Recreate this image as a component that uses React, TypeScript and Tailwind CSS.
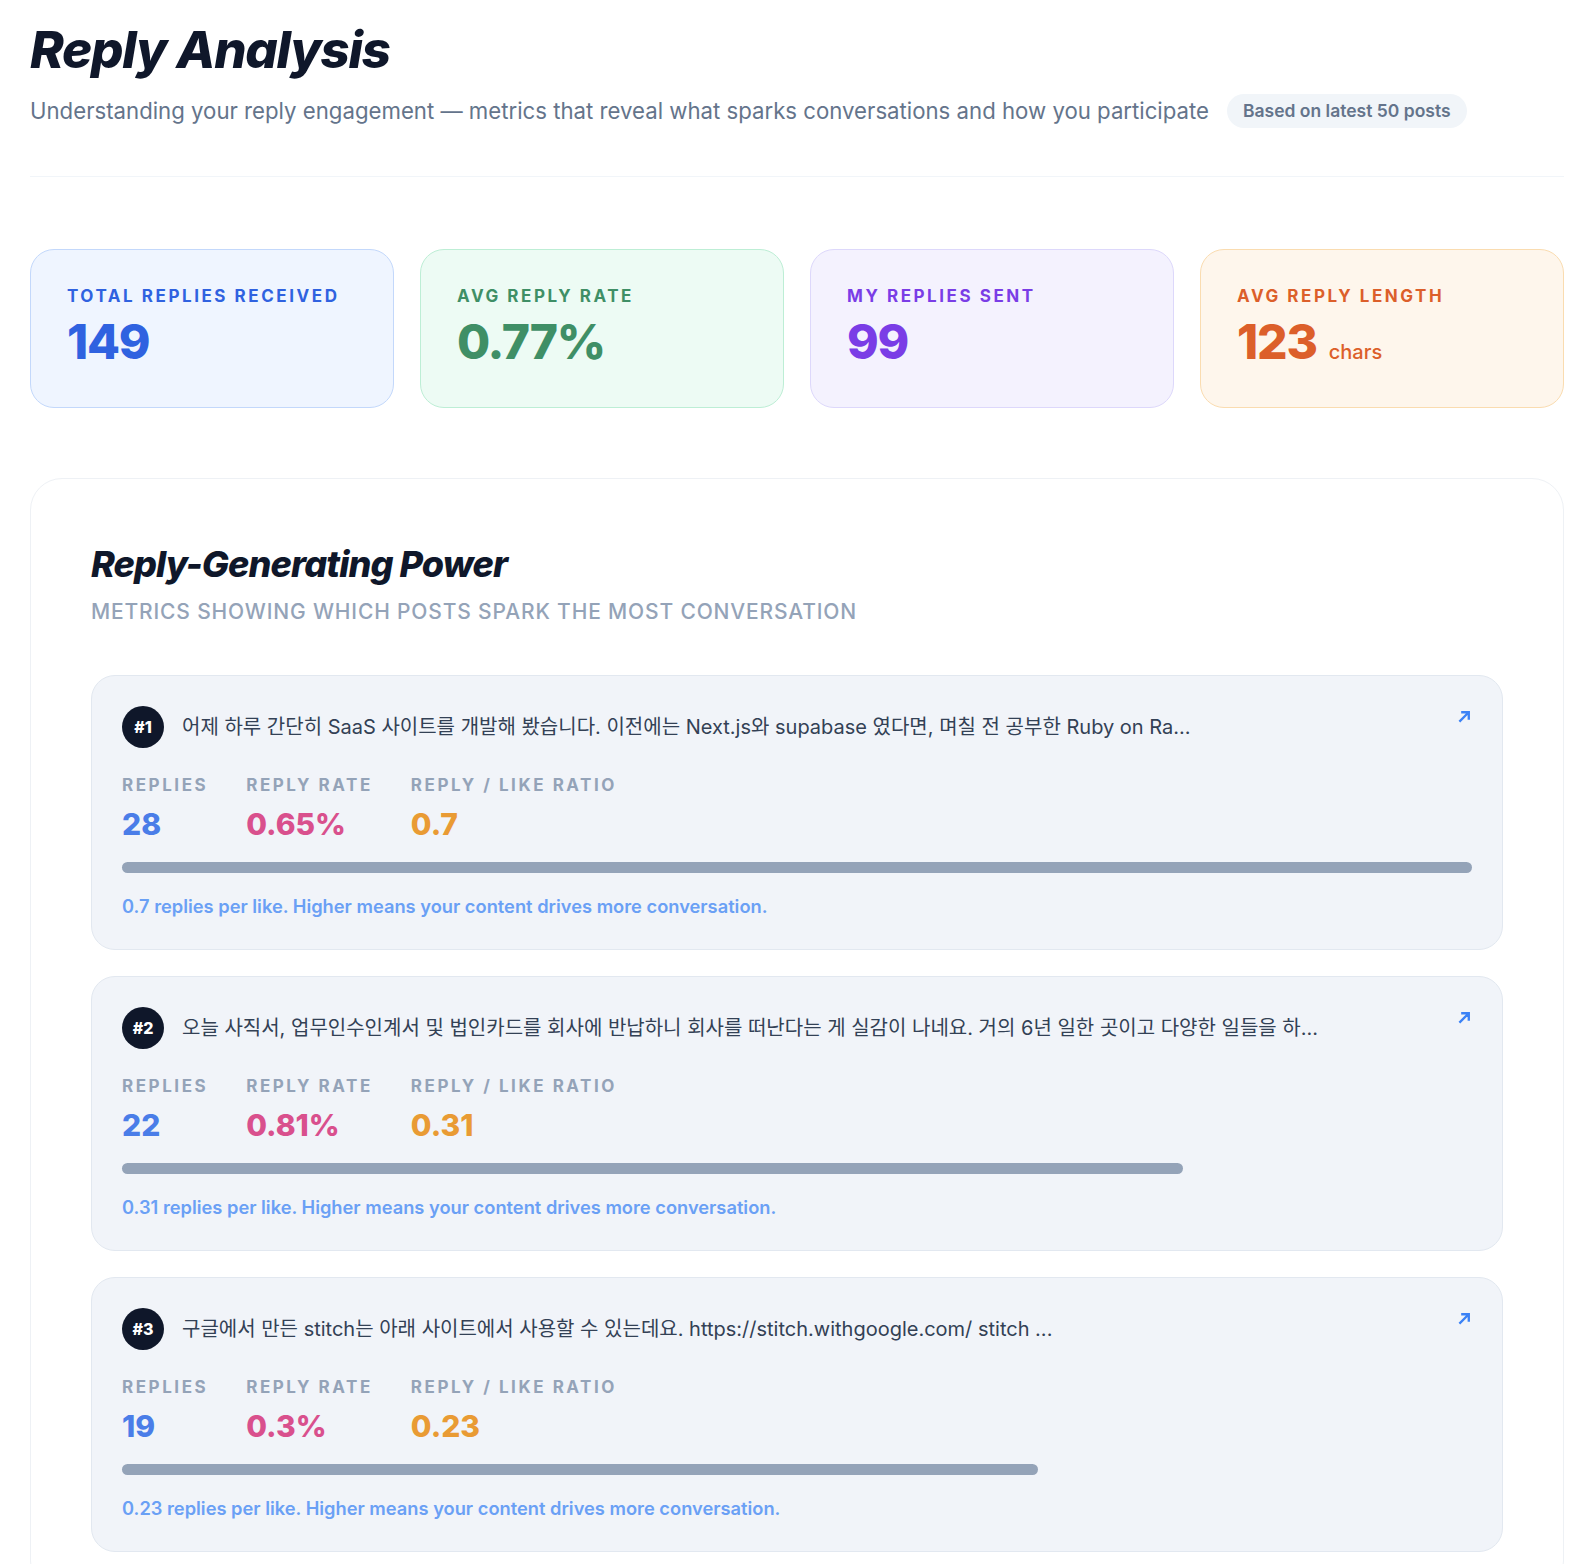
import React from "react";

const FONT = { fontFamily: 'Inter, "Noto Sans CJK KR", "Noto Sans", sans-serif' };

type Post = {
  rank: number;
  text: string;
  replies: number;
  rate: string;
  ratio: string;
};

const posts: Post[] = [
  {
    rank: 1,
    text: "어제 하루 간단히 SaaS 사이트를 개발해 봤습니다. 이전에는 Next.js와 supabase 였다면, 며칠 전 공부한 Ruby on Ra...",
    replies: 28,
    rate: "0.65%",
    ratio: "0.7",
  },
  {
    rank: 2,
    text: "오늘 사직서, 업무인수인계서 및 법인카드를 회사에 반납하니 회사를 떠난다는 게 실감이 나네요. 거의 6년 일한 곳이고 다양한 일들을 하...",
    replies: 22,
    rate: "0.81%",
    ratio: "0.31",
  },
  {
    rank: 3,
    text: "구글에서 만든 stitch는 아래 사이트에서 사용할 수 있는데요. https://stitch.withgoogle.com/ stitch ...",
    replies: 19,
    rate: "0.3%",
    ratio: "0.23",
  },
];

const maxReplies = 28;

function ArrowIcon() {
  return (
    <svg width="15" height="15" viewBox="0 0 14 14" fill="none">
      <path d="M3 11L10.5 3.5M5 3H11V9" stroke="#3b82f6" strokeWidth="2.2" strokeLinecap="square" />
    </svg>
  );
}

function StatCard({
  label,
  value,
  suffix,
  box,
  color,
}: {
  label: string;
  value: string;
  suffix?: string;
  box: string;
  color: string;
}) {
  return (
    <div className={`rounded-3xl border h-[159px] px-9 pt-[34px] ${box}`}>
      <div className={`text-[17px] font-bold tracking-[0.15em] leading-6 ${color}`}>{label}</div>
      <div className={`mt-[10px] flex items-baseline gap-3 ${color}`}>
        <span className="text-5xl font-extrabold leading-[48px] tracking-tight">{value}</span>
        {suffix && <span className="text-xl font-medium">{suffix}</span>}
      </div>
    </div>
  );
}

function Metric({ label, value, color }: { label: string; value: string | number; color: string }) {
  return (
    <div>
      <div className="text-[17px] font-bold leading-[22px] tracking-[0.15em] text-[#94a3b8]">{label}</div>
      <div className={`mt-[10px] text-[30px] font-extrabold leading-9 ${color}`}>{value}</div>
    </div>
  );
}

function PostCard({ p }: { p: Post }) {
  const pct = (p.replies / maxReplies) * 100;
  return (
    <div className="rounded-3xl border border-[#e2e8f0] bg-[#f1f4f9] px-[30px] pt-[30px] pb-[30px]">
      <div className="flex items-start justify-between">
        <div className="flex items-center gap-[18px]">
          <div className="flex h-[42px] w-[42px] shrink-0 items-center justify-center rounded-full bg-[#0f172a] text-[16px] font-extrabold text-white">
            #{p.rank}
          </div>
          <div className="text-[20px] text-[#334155]">{p.text}</div>
        </div>
        <div className="pt-[3px]">
          <ArrowIcon />
        </div>
      </div>
      <div className="mt-[26px] flex gap-[38px]">
        <Metric label="REPLIES" value={p.replies} color="text-[#4a7de8]" />
        <Metric label="REPLY RATE" value={p.rate} color="text-[#d9508d]" />
        <Metric label="REPLY / LIKE RATIO" value={p.ratio} color="text-[#e99b34]" />
      </div>
      <div className="mt-[20px] h-[11px] w-full rounded-full">
        <div className="h-full rounded-full bg-[#94a3b8]" style={{ width: `${pct}%` }} />
      </div>
      <div className="mt-5 text-[18.3px] font-semibold leading-[26px] text-[#6aa0f5]">
        {p.ratio} replies per like. Higher means your content drives more conversation.
      </div>
    </div>
  );
}

export default function App() {
  return (
    <div className="min-h-screen bg-white pl-[30px] pr-[20px] pt-[18px]" style={FONT}>
      <div className="border-b border-[#f1f5f9] pb-[48px]">
        <h1 className="text-[51px] font-extrabold italic leading-[64px] tracking-tight text-[#0f172a]">
          Reply Analysis
        </h1>
        <div className="mt-[12px] flex items-center gap-[18px]">
          <p className="text-[22.2px] text-[#64748b]">
            Understanding your reply engagement — metrics that reveal what sparks conversations and how you participate
          </p>
          <span className="rounded-full bg-[#f1f5f9] px-4 py-1 text-[17.5px] font-semibold text-[#64748b]">
            Based on latest 50 posts
          </span>
        </div>
      </div>

      <div className="mt-[72px] grid grid-cols-4 gap-[26px]">
        <StatCard label="TOTAL REPLIES RECEIVED" value="149" box="bg-[#eff5ff] border-[#c3d8fb]" color="text-[#2f62e0]" />
        <StatCard label="AVG REPLY RATE" value="0.77%" box="bg-[#edfbf4] border-[#bdeed5]" color="text-[#3f8f66]" />
        <StatCard label="MY REPLIES SENT" value="99" box="bg-[#f4f2fe] border-[#ddd8fb]" color="text-[#7a3de6]" />
        <StatCard label="AVG REPLY LENGTH" value="123" suffix="chars" box="bg-[#fef6ec] border-[#fadcb0]" color="text-[#dc5f2a]" />
      </div>

      <div className="mt-[70px] rounded-[32px] border border-[#eef1f5] bg-white px-[60px] pt-[63px] pb-[40px]">
        <h2 className="text-4xl font-extrabold italic leading-[44px] tracking-tight text-[#0f172a]">
          Reply-Generating Power
        </h2>
        <p className="mt-[10px] text-[21px] font-medium tracking-[0.04em] text-[#94a3b8]">
          METRICS SHOWING WHICH POSTS SPARK THE MOST CONVERSATION
        </p>
        <div className="mt-[47px] flex flex-col gap-[26px]">
          {posts.map((p) => (
            <PostCard key={p.rank} p={p} />
          ))}
        </div>
      </div>
    </div>
  );
}
